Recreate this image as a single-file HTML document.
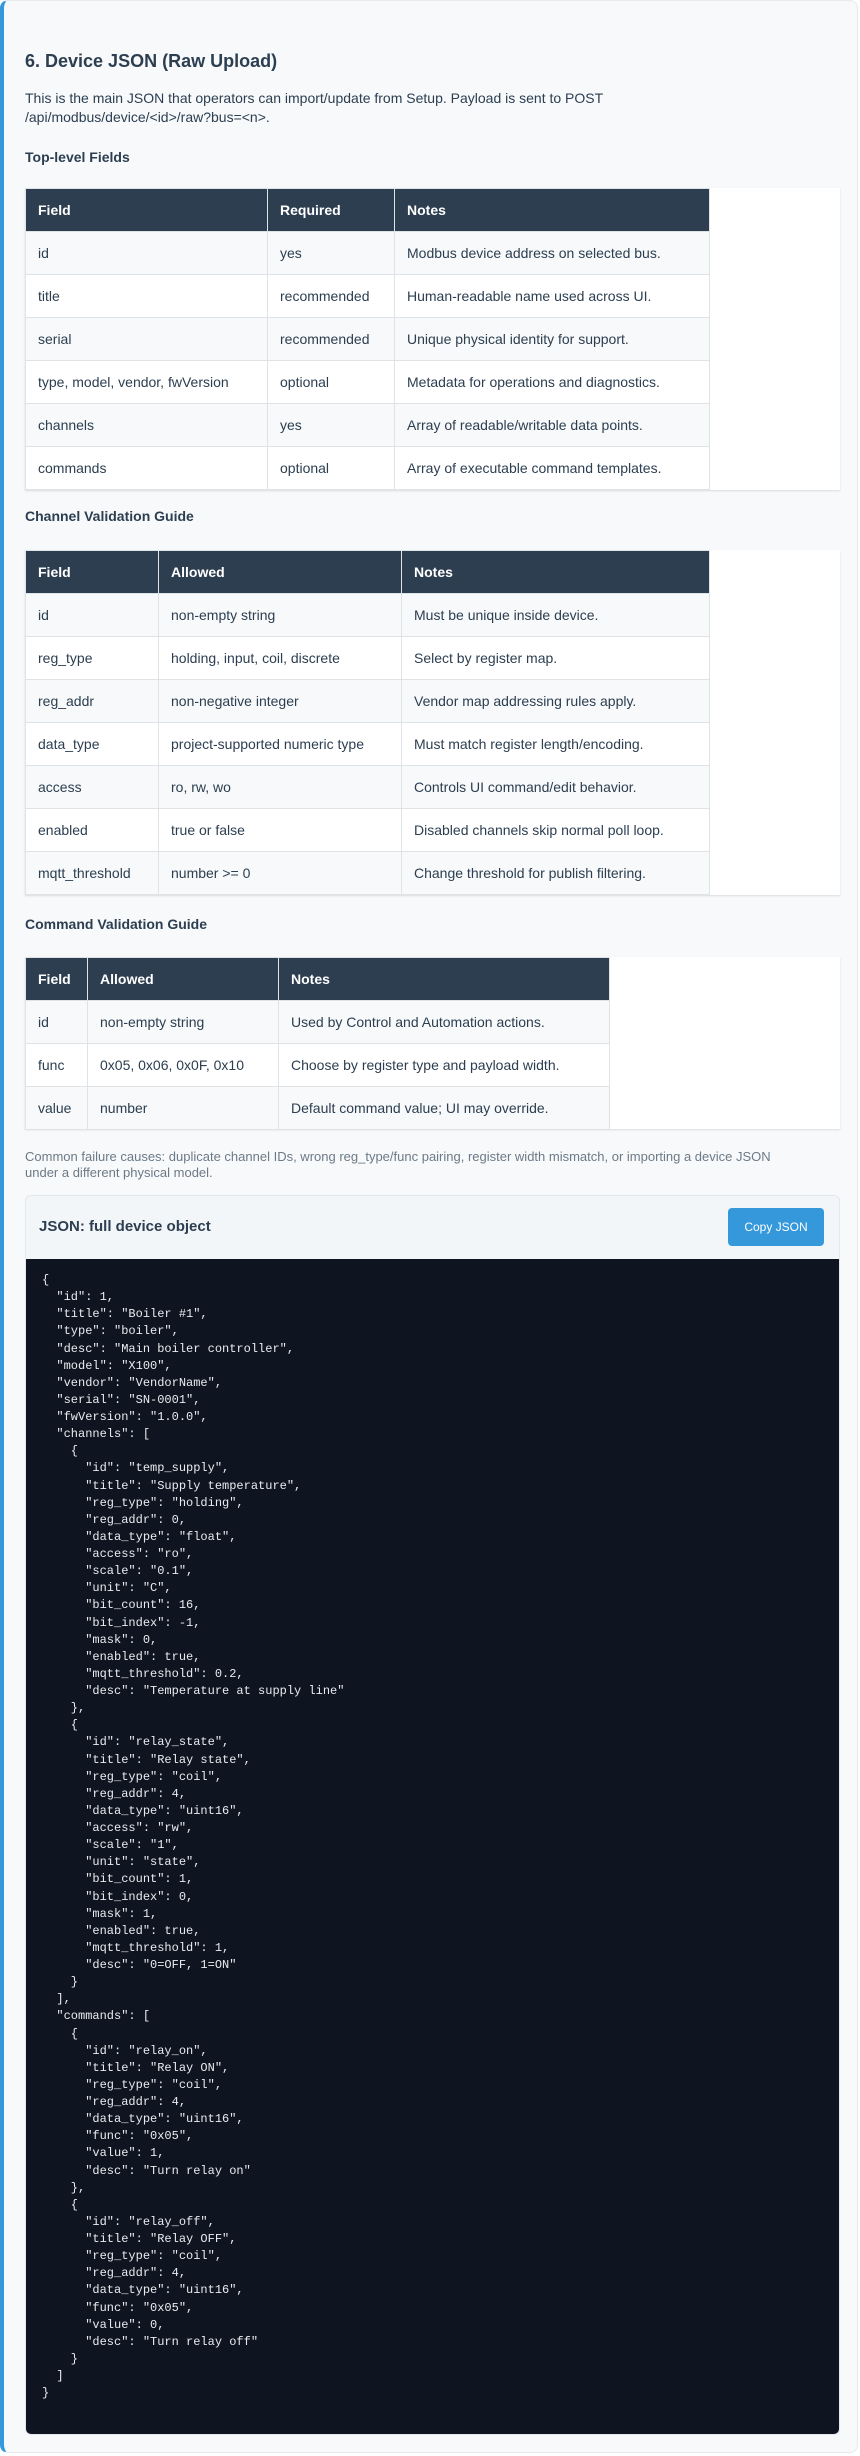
<!DOCTYPE html>
<html><head><meta charset="utf-8"><style>
*{box-sizing:border-box;margin:0;padding:0}
body{width:860px;height:2456px;background:#fff;font-family:"Liberation Sans",Arial,sans-serif;color:#2c3e50;position:relative;overflow:hidden}
.card{position:absolute;left:0;top:0;width:858px;height:2453px;background:#f7f9fb;border-left:4px solid #3498db;border-radius:8px;border-top:1px solid #e6eaee;border-right:1px solid #e6eaee;border-bottom:1px solid #e6eaee}
.a{position:absolute}
h2{font-size:18px;font-weight:bold;color:#2c3e50}
h3{font-size:14px;font-weight:bold;color:#2c3e50}
p.t{font-size:14px;line-height:19px;color:#2c3e50}
.wrap{position:absolute;left:25px;width:815px;background:#fff;box-shadow:0 1px 2px rgba(0,0,0,.12)}
table{border-collapse:collapse;font-size:14px;color:#2c3e50}
th{background:#2d3e50;color:#fff;text-align:left;font-weight:bold;height:43px;padding:0 12px;border:1px solid #dfe3e6}
td{height:43px;padding:0 12px;border:1px solid #dfe3e6;white-space:nowrap}
tr:nth-child(even) td{background:#f7f9fa}
.note{font-size:13px;line-height:16px;color:#6c7a86}
.jc{position:absolute;left:25px;top:1195px;width:815px;height:1240px;background:#f3f6f9;border:1px solid #e3e8ec;border-radius:6px;overflow:hidden}
.btn{position:absolute;right:15px;top:12px;width:96px;height:38px;background:#3498db;color:#fff;border-radius:4px;font-size:12px;text-align:center;line-height:38px}
pre{position:absolute;left:0;top:63px;width:815px;height:1177px;background:#0f1520;color:#e8ecf0;font-family:"Liberation Mono","Courier New",monospace;font-size:12px;line-height:17.12px;padding:13px 16px}
</style></head><body>
<div class="card"></div>
<h2 class="a" style="left:25px;top:51px">6. Device JSON (Raw Upload)</h2>
<p class="t a" style="left:25px;top:89px;width:700px">This is the main JSON that operators can import/update from Setup. Payload is sent to POST /api/modbus/device/&lt;id&gt;/raw?bus=&lt;n&gt;.</p>
<h3 class="a" style="left:25px;top:149px">Top-level Fields</h3>
<div class="wrap" style="top:188px;height:302px">
<table style="width:685px">
<tr><th style="width:242px">Field</th><th style="width:127px">Required</th><th>Notes</th></tr>
<tr><td>id</td><td>yes</td><td>Modbus device address on selected bus.</td></tr>
<tr><td>title</td><td>recommended</td><td>Human-readable name used across UI.</td></tr>
<tr><td>serial</td><td>recommended</td><td>Unique physical identity for support.</td></tr>
<tr><td>type, model, vendor, fwVersion</td><td>optional</td><td>Metadata for operations and diagnostics.</td></tr>
<tr><td>channels</td><td>yes</td><td>Array of readable/writable data points.</td></tr>
<tr><td>commands</td><td>optional</td><td>Array of executable command templates.</td></tr>
</table></div>
<h3 class="a" style="left:25px;top:508px">Channel Validation Guide</h3>
<div class="wrap" style="top:550px;height:345px">
<table style="width:685px">
<tr><th style="width:133px">Field</th><th style="width:243px">Allowed</th><th>Notes</th></tr>
<tr><td>id</td><td>non-empty string</td><td>Must be unique inside device.</td></tr>
<tr><td>reg_type</td><td>holding, input, coil, discrete</td><td>Select by register map.</td></tr>
<tr><td>reg_addr</td><td>non-negative integer</td><td>Vendor map addressing rules apply.</td></tr>
<tr><td>data_type</td><td>project-supported numeric type</td><td>Must match register length/encoding.</td></tr>
<tr><td>access</td><td>ro, rw, wo</td><td>Controls UI command/edit behavior.</td></tr>
<tr><td>enabled</td><td>true or false</td><td>Disabled channels skip normal poll loop.</td></tr>
<tr><td>mqtt_threshold</td><td>number &gt;= 0</td><td>Change threshold for publish filtering.</td></tr>
</table></div>
<h3 class="a" style="left:25px;top:916px">Command Validation Guide</h3>
<div class="wrap" style="top:957px;height:172px">
<table style="width:585px">
<tr><th style="width:62px">Field</th><th style="width:191px">Allowed</th><th>Notes</th></tr>
<tr><td>id</td><td>non-empty string</td><td>Used by Control and Automation actions.</td></tr>
<tr><td>func</td><td>0x05, 0x06, 0x0F, 0x10</td><td>Choose by register type and payload width.</td></tr>
<tr><td>value</td><td>number</td><td>Default command value; UI may override.</td></tr>
</table></div>
<p class="note a" style="left:25px;top:1149px;width:800px">Common failure causes: duplicate channel IDs, wrong reg_type/func pairing, register width mismatch, or importing a device JSON<br>under a different physical model.</p>
<div class="jc">
<div class="a" style="left:13px;top:22px;font-size:15px;font-weight:bold;color:#2c3e50">JSON: full device object</div>
<div class="btn">Copy JSON</div>
<pre>{
  "id": 1,
  "title": "Boiler #1",
  "type": "boiler",
  "desc": "Main boiler controller",
  "model": "X100",
  "vendor": "VendorName",
  "serial": "SN-0001",
  "fwVersion": "1.0.0",
  "channels": [
    {
      "id": "temp_supply",
      "title": "Supply temperature",
      "reg_type": "holding",
      "reg_addr": 0,
      "data_type": "float",
      "access": "ro",
      "scale": "0.1",
      "unit": "C",
      "bit_count": 16,
      "bit_index": -1,
      "mask": 0,
      "enabled": true,
      "mqtt_threshold": 0.2,
      "desc": "Temperature at supply line"
    },
    {
      "id": "relay_state",
      "title": "Relay state",
      "reg_type": "coil",
      "reg_addr": 4,
      "data_type": "uint16",
      "access": "rw",
      "scale": "1",
      "unit": "state",
      "bit_count": 1,
      "bit_index": 0,
      "mask": 1,
      "enabled": true,
      "mqtt_threshold": 1,
      "desc": "0=OFF, 1=ON"
    }
  ],
  "commands": [
    {
      "id": "relay_on",
      "title": "Relay ON",
      "reg_type": "coil",
      "reg_addr": 4,
      "data_type": "uint16",
      "func": "0x05",
      "value": 1,
      "desc": "Turn relay on"
    },
    {
      "id": "relay_off",
      "title": "Relay OFF",
      "reg_type": "coil",
      "reg_addr": 4,
      "data_type": "uint16",
      "func": "0x05",
      "value": 0,
      "desc": "Turn relay off"
    }
  ]
}</pre>
</div>
</body></html>
